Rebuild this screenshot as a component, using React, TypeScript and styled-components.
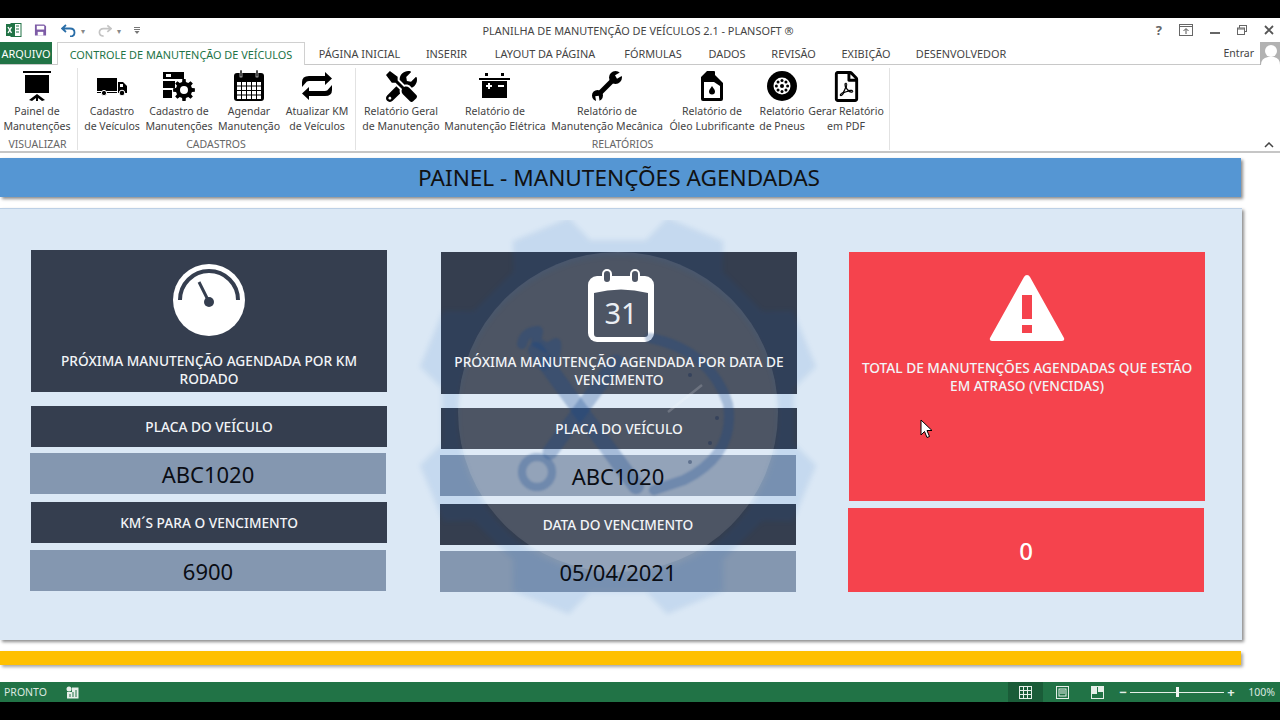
import React from 'react'
import styled, { createGlobalStyle } from 'styled-components'
import { FaTools, FaRegFilePdf } from 'react-icons/fa'

const UI = '"Noto Sans", "Open Sans", "Liberation Sans", sans-serif'
const GREEN = '#217346'
const DARK = '#353e4f'
const STEEL = '#8497b0'
const RED = '#f5434d'

const GlobalStyle = createGlobalStyle`
  html, body { margin: 0; padding: 0; background: #000; }
  body { font-family: ${UI}; }
  * { box-sizing: border-box; }
`

// gear outline as an svg path, used by the ribbon icon and the watermark
const gearPath = (cx: number, cy: number, outer: number, inner: number, teeth: number, offset = 0) => {
  const step = (Math.PI * 2) / teeth
  const pts: string[] = []
  for (let i = 0; i < teeth; i++) {
    const a = i * step + offset
    const seq: [number, number][] = [
      [a - step * 0.3, inner],
      [a - step * 0.19, outer],
      [a + step * 0.19, outer],
      [a + step * 0.3, inner],
    ]
    seq.forEach(([t, r]) => pts.push(`${(cx + Math.cos(t) * r).toFixed(2)} ${(cy + Math.sin(t) * r).toFixed(2)}`))
  }
  return `M${pts.join('L')}Z`
}

const circlePath = (cx: number, cy: number, r: number) =>
  `M${cx - r} ${cy}a${r} ${r} 0 1 0 ${r * 2} 0a${r} ${r} 0 1 0 ${-r * 2} 0Z`

/* ---------- ribbon icons ---------- */
const Board = () => (
  <svg width="30" height="32" viewBox="0 0 30 32">
    <rect x="1" y="1" width="28" height="2" />
    <rect x="3" y="5" width="24" height="18" />
    <path d="M15 24l8 6-3 1-4-3v3h-2v-3l-4 3-3-1z" />
  </svg>
)
const Truck = () => (
  <svg width="32" height="32" viewBox="0 0 32 32">
    <rect x="1" y="8" width="20" height="13" />
    <rect x="1" y="22" width="20" height="1" />
    <path d="M22 12h5l4 4v7h-9z" />
    <rect x="24" y="14" width="3" height="3" fill="#fff" />
    <circle cx="8" cy="23" r="2.6" stroke="#fff" />
    <circle cx="26" cy="23" r="2.8" stroke="#fff" />
  </svg>
)
const StackGear = () => (
  <svg width="32" height="32" viewBox="0 0 32 32">
    <rect x="0" y="2" width="21" height="7" />
    <rect x="3" y="4" width="5" height="3" fill="#fff" />
    <rect x="0" y="11" width="12" height="7" />
    <rect x="0" y="20" width="9" height="8" />
    <path fillRule="evenodd" d={gearPath(21, 20, 11, 8.2, 8) + circlePath(21, 20, 4)} />
  </svg>
)
const Calendar = () => (
  <svg width="32" height="32" viewBox="0 0 32 32">
    <rect x="1" y="3" width="30" height="28" rx="3" />
    <rect x="7" y="0" width="2" height="7" stroke="#fff" strokeWidth=".6" />
    <rect x="23" y="0" width="2" height="7" stroke="#fff" strokeWidth=".6" />
    {[0, 1, 2, 3].map(r =>
      [0, 1, 2, 3, 4].map(c => (
        <rect key={`${r}-${c}`} x={4 + c * 5} y={12 + r * 4.5} width="4" height="3.5" fill="#fff" />
      )),
    )}
  </svg>
)
const SwapArrows = () => (
  <svg width="32" height="32" viewBox="0 0 32 32">
    <path d="M24 2l7 6.500-7 6.500v-4H8q-2.500 0-3.500 2L1 17v-5q0-6 7-6h16z" />
    <path transform="rotate(180 16 16)" d="M24 2l7 6.500-7 6.500v-4H8q-2.500 0-3.500 2L1 17v-5q0-6 7-6h16z" />
  </svg>
)
const Battery = () => (
  <svg width="32" height="28" viewBox="0 0 32 28">
    <rect x="6" y="1" width="3" height="3" />
    <rect x="22" y="1" width="3" height="3" />
    <rect x="0" y="6" width="31" height="2" />
    <rect x="3" y="9" width="25" height="17" />
    <path d="M7 13h2v-2h2v2h2v2h-2v2H9v-2H7z" fill="#fff" />
    <rect x="19" y="13" width="6" height="2" fill="#fff" />
  </svg>
)
const Wrench = () => (
  <svg width="32" height="32" viewBox="0 0 32 32">
    <path d="M7 25L24 8" stroke="#000" strokeWidth="5" />
    <circle cx="24.500" cy="7.500" r="6.500" />
    <circle cx="6.500" cy="25.500" r="5.500" />
    <path d="M25 7l7-4" stroke="#fff" strokeWidth="4" />
    <path d="M6 26l1 6" stroke="#fff" strokeWidth="3.500" />
  </svg>
)
const OilBottle = () => (
  <svg width="24" height="32" viewBox="0 0 24 32">
    <path d="M7 1h7a1 1 0 0 1 1 1v3l8 8v16a2 2 0 0 1-2 2H3a2 2 0 0 1-2-2V7z" />
    <path d="M4 12h10l6 4v12H4z" fill="#fff" />
    <path d="M12 16c2 3 3 4 3 5.500a3 3 0 0 1-6 0c0-1.500 1-2.500 3-5.500z" />
  </svg>
)
const Tire = () => (
  <svg width="32" height="32" viewBox="0 0 32 32">
    <circle cx="16" cy="16" r="15" />
    <circle cx="16" cy="16" r="8.500" fill="#fff" />
    {[0, 45, 90, 135, 180, 225, 270, 315].map(a => (
      <circle
        key={a}
        cx={16 + Math.cos((a * Math.PI) / 180) * 5.6}
        cy={16 + Math.sin((a * Math.PI) / 180) * 5.6}
        r="1.500"
      />
    ))}
    <circle cx="16" cy="16" r="2" />
  </svg>
)

/* ---------- panel icons ---------- */
const Gauge = () => (
  <svg width="72" height="72" viewBox="0 0 72 72">
    <circle cx="36" cy="36" r="36" fill="#fff" />
    <path d="M7 36a29 29 0 0 1 58 0" fill="none" stroke={DARK} strokeWidth="4" />
    <path d="M26 18l10 20" stroke={DARK} strokeWidth="3" />
    <circle cx="36" cy="38" r="5" fill={DARK} />
  </svg>
)
const BigCalendar = () => (
  <CalendarSvg width="68" height="74" viewBox="0 0 68 74">
    <rect x="1" y="7" width="66" height="66" rx="9" fill="#fff" />
    <path d="M7 24q27-7 54 0v41q0 3-3 3H10q-3 0-3-3z" fill={DARK} />
    <rect x="16" y="1" width="8" height="13" rx="4" fill={DARK} stroke="#fff" strokeWidth="2" />
    <rect x="44" y="1" width="8" height="13" rx="4" fill={DARK} stroke="#fff" strokeWidth="2" />
    <text x="34" y="55" textAnchor="middle" fontSize="29" fill="#e8ecf2" fontFamily={UI}>31</text>
  </CalendarSvg>
)
const Warning = () => (
  <svg width="76" height="68" viewBox="0 0 76 68">
    <path d="M38 1q2 0 3 2l34 61q1 3-2 3H3q-3 0-2-3L35 3q1-2 3-2z" fill="#fff" />
    <rect x="33" y="21" width="10" height="24" fill={RED} />
    <rect x="33" y="51" width="10" height="8" fill={RED} />
  </svg>
)

const Watermark = () => (
  <WatermarkLayer width="440" height="400" viewBox="400 220 440 400">
    <GearShape fillRule="evenodd" d={gearPath(618, 416, 204, 178, 8, Math.PI / 8) + circlePath(618, 416, 160)} />
    <circle cx="618" cy="412" r="160" fill="rgba(255,255,255,.12)" />
    <ToolStrokes>
      <path d="M536 350l60 82 40 54" strokeWidth="16" />
      <path d="M522 344q2-12 16-13l-2 11 11 6 9-5q2 14-12 22" strokeWidth="10" />
      <path d="M616 362l-66 90" strokeWidth="15" />
      <circle cx="537" cy="472" r="15" strokeWidth="8" />
      <path d="M650 338q60 12 78 66 8 50-44 76l-30 10" strokeWidth="10" />
    </ToolStrokes>
    <path d="M668 412l34-27" stroke="rgba(255,255,255,.18)" strokeWidth="2.500" />
    <g fill="rgba(20,40,80,.4)">
      <circle cx="717" cy="418" r="2" />
      <circle cx="710" cy="443" r="2" />
      <circle cx="690" cy="462" r="2" />
      <circle cx="690" cy="375" r="2" />
    </g>
  </WatermarkLayer>
)

const tabs: [string, number][] = [
  ['PÁGINA INICIAL', 81],
  ['INSERIR', 39],
  ['LAYOUT DA PÁGINA', 104],
  ['FÓRMULAS', 58],
  ['DADOS', 36],
  ['REVISÃO', 43],
  ['EXIBIÇÃO', 48],
  ['DESENVOLVEDOR', 88],
]

const App = () => (
  <Screen>
    <GlobalStyle />
    <BlackBar $h={18} />
    <TitleBar>
      <QuickAccess>
        <svg width="16" height="16" viewBox="0 0 16 16">
          <rect x="5" y="1.500" width="10" height="13" fill="#fff" stroke="#217346" />
          <path d="M10 4h3M10 7h3M10 10h3" stroke="#217346" />
          <rect x="0" y="2" width="9" height="12" fill="#217346" />
          <path d="M2 5l3.500 6M5.500 5L2 11" stroke="#fff" strokeWidth="1.400" />
        </svg>
        <QuickSlot $w={13} $left={12}>
          <svg width="14" height="14" viewBox="0 0 14 14">
            <path d="M1 1h10l2 2v10H1z" fill="#7d5ba6" />
            <rect x="3" y="2.500" width="8" height="4" fill="#fff" />
            <rect x="4" y="9" width="6" height="4" fill="#fff" />
          </svg>
        </QuickSlot>
        <QuickSlot $w={15} $left={14}>
          <svg width="15" height="13" viewBox="0 0 15 13">
            <path d="M5 1L1 4.500 5 8M1.500 4.500H9q4.500 0 4.500 4T9 12.500" fill="none" stroke="#2a6ea8" strokeWidth="1.800" />
          </svg>
        </QuickSlot>
        <Caret $left={5}>▾</Caret>
        <QuickSlot $w={14} $left={13}>
          <svg width="15" height="13" viewBox="0 0 15 13">
            <path d="M10 1l4 3.500L10 8M13.500 4.500H6q-4.500 0-4.500 4T6 12.500" fill="none" stroke="#c4c4c4" strokeWidth="1.800" />
          </svg>
        </QuickSlot>
        <Caret $left={5}>▾</Caret>
        <QuickSlot $w={6} $left={13}>
          <svg width="6" height="7" viewBox="0 0 6 7">
            <path d="M0 .5h6M0 2.500h6" stroke="#777" />
            <path d="M.5 4h5L3 7z" fill="#777" />
          </svg>
        </QuickSlot>
      </QuickAccess>
      <WindowTitle>PLANILHA DE MANUTENÇÃO DE VEÍCULOS 2.1 - PLANSOFT ®</WindowTitle>
      <WindowButtons>
        <HelpMark>?</HelpMark>
        <svg width="14" height="12" viewBox="0 0 14 12">
          <rect x=".5" y=".5" width="13" height="11" fill="none" stroke="#666" />
          <path d="M1 2.500h12" stroke="#666" />
          <path d="M7 10V5M4.500 7L7 4.500 9.500 7" fill="none" stroke="#555" />
        </svg>
        <svg width="10" height="12" viewBox="0 0 10 12">
          <rect y="8" width="10" height="2" fill="#666" />
        </svg>
        <svg width="10" height="10" viewBox="0 0 10 10" fill="none" stroke="#666">
          <rect x="2.500" y=".5" width="7" height="6" />
          <rect x=".5" y="3" width="7" height="6.500" fill="#fff" />
          <path d="M1 4h6" />
        </svg>
        <svg width="10" height="10" viewBox="0 0 10 10">
          <path d="M1 1l8 8M9 1L1 9" stroke="#555" strokeWidth="1.800" />
        </svg>
      </WindowButtons>
    </TitleBar>
    <TabRow>
      <FileTab>ARQUIVO</FileTab>
      <ActiveTab>CONTROLE DE MANUTENÇÃO DE VEÍCULOS</ActiveTab>
      <TabList>
        {tabs.map(([label, w]) => (
          <Tab key={label} $w={w}>{label}</Tab>
        ))}
      </TabList>
      <SignIn>
        <span>Entrar</span>
        <Avatar>
          <svg width="20" height="23" viewBox="0 0 20 23">
            <circle cx="11" cy="9" r="6" fill="#fff" />
            <path d="M1 23q0-7 7-8h6q6 1 6 8z" fill="#fff" />
          </svg>
        </Avatar>
      </SignIn>
    </TabRow>
    <Ribbon>
      <RibbonGroup $w={78} $pad={0}>
        <RibbonItems>
          <RibbonItem $w={74} label={['Painel de', 'Manutenções']}><Board /></RibbonItem>
        </RibbonItems>
        <GroupName $nudge={-2}>VISUALIZAR</GroupName>
      </RibbonGroup>
      <RibbonGroup $w={278} $pad={3}>
        <RibbonItems>
          <RibbonItem $w={62} label={['Cadastro', 'de Veículos']}><Truck /></RibbonItem>
          <RibbonItem $w={68} label={['Cadastro de', 'Manutenções']}><StackGear /></RibbonItem>
          <RibbonItem $w={68} label={['Agendar', 'Manutenção']}><Calendar /></RibbonItem>
          <RibbonItem $w={64} label={['Atualizar KM', 'de Veículos']}><SwapArrows /></RibbonItem>
        </RibbonItems>
        <GroupName $nudge={-4}>CADASTROS</GroupName>
      </RibbonGroup>
      <RibbonGroup $w={534} $pad={4}>
        <RibbonItems>
          <RibbonItem $w={82} label={['Relatório Geral', 'de Manutenção']}><FaTools size={31} /></RibbonItem>
          <RibbonItem $w={102} label={['Relatório de', 'Manutenção Elétrica']}><Battery /></RibbonItem>
          <RibbonItem $w={118} label={['Relatório de', 'Manutenção Mecânica']}><Wrench /></RibbonItem>
          <RibbonItem $w={88} label={['Relatório de', 'Óleo Lubrificante']}><OilBottle /></RibbonItem>
          <RibbonItem $w={48} label={['Relatório', 'de Pneus']}><Tire /></RibbonItem>
          <RibbonItem $w={76} label={['Gerar Relatório', 'em PDF']}><FaRegFilePdf size={31} /></RibbonItem>
        </RibbonItems>
        <GroupName $nudge={-4}>RELATÓRIOS</GroupName>
      </RibbonGroup>
      <Collapse>
        <svg width="10" height="6" viewBox="0 0 10 6">
          <path d="M1 5l4-4 4 4" fill="none" stroke="#444" strokeWidth="1.500" />
        </svg>
      </Collapse>
    </Ribbon>
    <Sheet>
      <Banner>PAINEL - MANUTENÇÕES AGENDADAS</Banner>
      <Panel>
        <Column $left={31} $top={42}>
          <HeadTile $h={142} $pad={14} $bg={DARK}>
            <Gauge />
            <Caption $top={16}>PRÓXIMA MANUTENÇÃO AGENDADA POR KM RODADO</Caption>
          </HeadTile>
          <LabelTile $top={14}><Lifted>PLACA DO VEÍCULO</Lifted></LabelTile>
          <ValueTile $top={6} $nudge={-1}><Lifted>ABC1020</Lifted></ValueTile>
          <LabelTile $top={8}><Lifted>KM´S PARA O VENCIMENTO</Lifted></LabelTile>
          <ValueTile $top={7} $nudge={-1}><Lifted>6900</Lifted></ValueTile>
        </Column>
        <Column $left={54} $top={44}>
          <HeadTile $h={142} $pad={17} $bg={DARK}>
            <BigCalendar />
            <Caption $top={10}>PRÓXIMA MANUTENÇÃO AGENDADA POR DATA DE VENCIMENTO</Caption>
          </HeadTile>
          <LabelTile $top={14}><Lifted>PLACA DO VEÍCULO</Lifted></LabelTile>
          <ValueTile $top={6} $nudge={-1}><Lifted>ABC1020</Lifted></ValueTile>
          <LabelTile $top={8} $nudge={-1}><Lifted>DATA DO VENCIMENTO</Lifted></LabelTile>
          <ValueTile $top={6} $nudge={-1}><Lifted>05/04/2021</Lifted></ValueTile>
        </Column>
        <Column $left={52} $top={44}>
          <HeadTile $h={249} $pad={22} $bg={RED}>
            <Warning />
            <Caption $top={17}>TOTAL DE MANUTENÇÕES AGENDADAS QUE ESTÃO EM ATRASO (VENCIDAS)</Caption>
            <Pointer width="13" height="20" viewBox="0 0 13 20">
              <path d="M1 1v15l3.500-3.500 2.500 6 2.500-1-2.500-6H12z" fill="#fff" stroke="#000" />
            </Pointer>
          </HeadTile>
          <TotalTile>0</TotalTile>
        </Column>
        <Watermark />
      </Panel>
      <YellowStrip />
    </Sheet>
    <StatusBar>
      <StatusLeft>
        <span>PRONTO</span>
        <svg width="13" height="13" viewBox="0 0 13 13">
          <circle cx="3" cy="3" r="2.500" fill="#e6efe9" />
          <path d="M1 6v6.500h11.500V1.500H6V6z" fill="#e6efe9" />
          <path d="M4 11V8M7 11V6M10 11V4" stroke="#217346" />
        </svg>
      </StatusLeft>
      <StatusRight>
        <ViewButton $active>
          <svg width="13" height="13" viewBox="0 0 13 13" fill="none" stroke="#e6efe9">
            <rect x=".5" y=".5" width="12" height="12" />
            <path d="M4.500 1v11M8.500 1v11M1 4.500h11M1 8.500h11" />
          </svg>
        </ViewButton>
        <ViewButton>
          <svg width="13" height="13" viewBox="0 0 13 13" fill="none" stroke="#e6efe9">
            <rect x=".5" y=".5" width="12" height="12" />
            <rect x="3" y="3" width="7" height="7" />
            <path d="M4 5h5M4 7h5" />
          </svg>
        </ViewButton>
        <ViewButton>
          <svg width="13" height="13" viewBox="0 0 13 13">
            <rect x=".5" y=".5" width="12" height="12" fill="none" stroke="#e6efe9" />
            <rect x="1" y="1" width="5" height="7" fill="#e6efe9" />
            <rect x="7" y="1" width="5" height="5" fill="#e6efe9" />
          </svg>
        </ViewButton>
        <ZoomSign $left={4}>−</ZoomSign>
        <ZoomTrack>
          <ZoomThumb />
        </ZoomTrack>
        <ZoomSign $left={3}>+</ZoomSign>
        <ZoomValue>100%</ZoomValue>
      </StatusRight>
    </StatusBar>
    <BlackBar $h={18} />
  </Screen>
)

const RibbonItem = ({ $w, label, children }: { $w: number; label: [string, string]; children: React.ReactNode }) => (
  <ItemBox $w={$w}>
    <IconSlot>{children}</IconSlot>
    <ItemLabel>{label[0]}</ItemLabel>
    <ItemLabel>{label[1]}</ItemLabel>
  </ItemBox>
)

export default App

const Screen = styled.div`
  width: 1280px;
  height: 720px;
  overflow: hidden;
  display: flex;
  flex-direction: column;
  background: #fff;
  color: #444;
`

const BlackBar = styled.div<{ $h: number }>`
  height: ${p => p.$h}px;
  flex: none;
  background: #000;
`

const TitleBar = styled.div`
  height: 24px;
  flex: none;
  display: grid;
  grid-template-columns: 1fr auto 1fr;
  align-items: center;
  background: #fff;
`

const QuickAccess = styled.div`
  display: flex;
  align-items: center;
  padding-left: 6px;
`

const QuickSlot = styled.div<{ $w: number; $left: number }>`
  width: ${p => p.$w}px;
  margin-left: ${p => p.$left}px;
  display: flex;
  justify-content: center;
`

const Caret = styled.span<{ $left: number }>`
  margin-left: ${p => p.$left}px;
  font-size: 8px;
  color: #888;
`

const WindowTitle = styled.div`
  font-size: 10.9px;
  color: #444;
  white-space: nowrap;
  padding-right: 4px;
`

const WindowButtons = styled.div`
  display: flex;
  align-items: center;
  justify-content: flex-end;
  gap: 17px;
  padding-right: 6px;
`

const HelpMark = styled.span`
  font-size: 13px;
  font-weight: 700;
  color: #666;
  line-height: 1;
`

const TabRow = styled.div`
  height: 23px;
  flex: none;
  display: flex;
  align-items: stretch;
  background: #fff;
  border-bottom: 1px solid #c8c8c8;
  font-size: 10.9px;
  color: #444;
`

const FileTab = styled.div`
  width: 52px;
  display: flex;
  align-items: center;
  justify-content: center;
  background: ${GREEN};
  color: #fff;
  white-space: nowrap;
`

const ActiveTab = styled.div`
  width: 248px;
  height: 23px;
  margin-left: 5px;
  display: flex;
  align-items: center;
  justify-content: center;
  border: 1px solid #d0d0d0;
  border-bottom: 0;
  background: #fff;
  color: ${GREEN};
  white-space: nowrap;
`

const TabList = styled.div`
  display: flex;
  align-items: center;
  gap: 27px;
  margin-left: 14px;
`

const Tab = styled.div<{ $w: number }>`
  width: ${p => p.$w}px;
  display: flex;
  justify-content: center;
  white-space: nowrap;
`

const SignIn = styled.div`
  margin-left: auto;
  display: flex;
  align-items: center;
  gap: 6px;
  font-size: 10.5px;
  color: #444;
`

const Avatar = styled.div`
  width: 20px;
  height: 23px;
  background: #b2b2b2;
  overflow: hidden;
  line-height: 0;
`

const Ribbon = styled.div`
  height: 88px;
  flex: none;
  display: flex;
  position: relative;
  padding-bottom: 1px;
  background: #fff;
  border-bottom: 2px solid #c6c6c6;
`

const RibbonGroup = styled.div<{ $w: number; $pad: number }>`
  width: ${p => p.$w}px;
  flex: none;
  display: flex;
  flex-direction: column;
  padding-left: ${p => p.$pad}px;
  margin-top: 3px;
  border-right: 1px solid #e2e2e2;
`

const RibbonItems = styled.div`
  flex: 1;
  display: flex;
  gap: 2px;
`

const ItemBox = styled.div<{ $w: number }>`
  width: ${p => p.$w}px;
  flex: none;
  display: flex;
  flex-direction: column;
  align-items: center;
`

const IconSlot = styled.div`
  height: 36px;
  display: flex;
  align-items: center;
  justify-content: center;
  color: #000;
  fill: #000;
`

const ItemLabel = styled.div`
  height: 15px;
  line-height: 15px;
  font-size: 10.55px;
  color: #444;
  white-space: nowrap;
  text-align: center;
`

const GroupName = styled.div<{ $nudge: number }>`
  height: 16px;
  margin-bottom: -3px;
  line-height: 15px;
  font-size: 10.5px;
  color: #666;
  text-align: center;
  margin-left: ${p => p.$nudge}px;
`

const Collapse = styled.div`
  position: absolute;
  right: 6px;
  bottom: 3px;
  line-height: 0;
`

const Sheet = styled.div`
  flex: 1;
  display: flex;
  flex-direction: column;
  padding-top: 5px;
  background: #fff;
`

const Banner = styled.div`
  width: 1241px;
  height: 39px;
  flex: none;
  display: flex;
  align-items: center;
  justify-content: center;
  padding-right: 3px;
  background: #5596d3;
  box-shadow: 2px 2px 3px rgba(0, 0, 0, 0.45);
  color: #111;
  font-size: 22.6px;
  white-space: nowrap;
`

const Panel = styled.div`
  position: relative;
  width: 1242px;
  height: 432px;
  flex: none;
  margin-top: 11px;
  display: flex;
  align-items: flex-start;
  background: #dbe8f5;
  border-top: 1px solid #bcd0e6;
  box-shadow: 2px 2px 3px rgba(0, 0, 0, 0.45);
`

const WatermarkLayer = styled.svg`
  position: absolute;
  left: 400px;
  top: 11px;
  pointer-events: none;
`

const GearShape = styled.path`
  fill: rgba(10, 90, 190, 0.1);
  filter: blur(2.5px);
`

const ToolStrokes = styled.g`
  fill: none;
  stroke: rgba(15, 65, 140, 0.27);
  stroke-linecap: round;
  stroke-linejoin: round;
  filter: blur(1px);
`

const CalendarSvg = styled.svg`
  margin-left: 4px;
  flex: none;
`

const Column = styled.div<{ $left: number; $top: number }>`
  width: 356px;
  flex: none;
  display: flex;
  flex-direction: column;
  margin-left: ${p => p.$left}px;
  margin-top: ${p => p.$top - 1}px;
`

const HeadTile = styled.div<{ $h: number; $pad: number; $bg: string }>`
  position: relative;
  height: ${p => p.$h}px;
  width: 356px;
  flex: none;
  display: flex;
  flex-direction: column;
  align-items: center;
  padding-top: ${p => p.$pad}px;
  background: ${p => p.$bg};
`

const Caption = styled.div<{ $top: number }>`
  position: relative;
  z-index: 1;
  margin-top: ${p => p.$top}px;
  width: 344px;
  text-align: center;
  color: #f2f4f7;
  font-size: 13.7px;
  font-weight: 500;
  line-height: 18px;
`

const Lifted = styled.span`
  position: relative;
  z-index: 1;
`

const Pointer = styled.svg`
  position: absolute;
  left: 71px;
  top: 167px;
`

const LabelTile = styled.div<{ $top: number; $nudge?: number }>`
  width: 356px;
  height: 41px;
  flex: none;
  margin-top: ${p => p.$top}px;
  margin-left: ${p => p.$nudge || 0}px;
  display: flex;
  align-items: center;
  justify-content: center;
  background: ${DARK};
  color: #f2f4f7;
  font-size: 13.7px;
  font-weight: 500;
`

const ValueTile = styled.div<{ $top: number; $nudge?: number }>`
  width: 356px;
  height: 41px;
  flex: none;
  margin-top: ${p => p.$top}px;
  margin-left: ${p => p.$nudge || 0}px;
  display: flex;
  align-items: center;
  justify-content: center;
  background: ${STEEL};
  color: #0a0d14;
  font-size: 22px;
`

const TotalTile = styled.div`
  width: 356px;
  height: 84px;
  flex: none;
  margin-top: 7px;
  margin-left: -1px;
  display: flex;
  align-items: center;
  justify-content: center;
  background: ${RED};
  color: #fff;
  font-size: 24px;
  font-weight: 500;
`

const YellowStrip = styled.div`
  width: 1241px;
  height: 14px;
  flex: none;
  margin-top: 11px;
  background: #ffc000;
  box-shadow: 2px 2px 3px rgba(0, 0, 0, 0.35);
`

const StatusBar = styled.div`
  height: 20px;
  margin-top: auto;
  flex: none;
  display: flex;
  align-items: center;
  justify-content: space-between;
  background: ${GREEN};
  color: #dbe8e0;
  font-size: 10.5px;
`

const StatusLeft = styled.div`
  display: flex;
  align-items: center;
  gap: 19px;
  padding-left: 4px;
`

const StatusRight = styled.div`
  display: flex;
  align-items: center;
  height: 100%;
`

const ViewButton = styled.div<{ $active?: boolean }>`
  width: 35px;
  height: 100%;
  display: flex;
  align-items: center;
  justify-content: center;
  margin-right: ${p => (p.$active ? 2 : 0)}px;
  background: ${p => (p.$active ? '#1a5c38' : 'transparent')};
`

const ZoomSign = styled.span<{ $left: number }>`
  margin-left: ${p => p.$left}px;
  width: 8px;
  text-align: center;
  font-size: 13px;
  font-weight: 700;
  color: #e6efe9;
`

const ZoomTrack = styled.div`
  position: relative;
  width: 94px;
  height: 1px;
  margin-left: 3px;
  background: #e6efe9;
`

const ZoomThumb = styled.div`
  position: absolute;
  left: 46px;
  top: -5px;
  width: 3px;
  height: 10px;
  background: #f2f6f3;
`

const ZoomValue = styled.span`
  width: 36px;
  margin-left: 9px;
  padding-right: 5px;
  text-align: right;
`
